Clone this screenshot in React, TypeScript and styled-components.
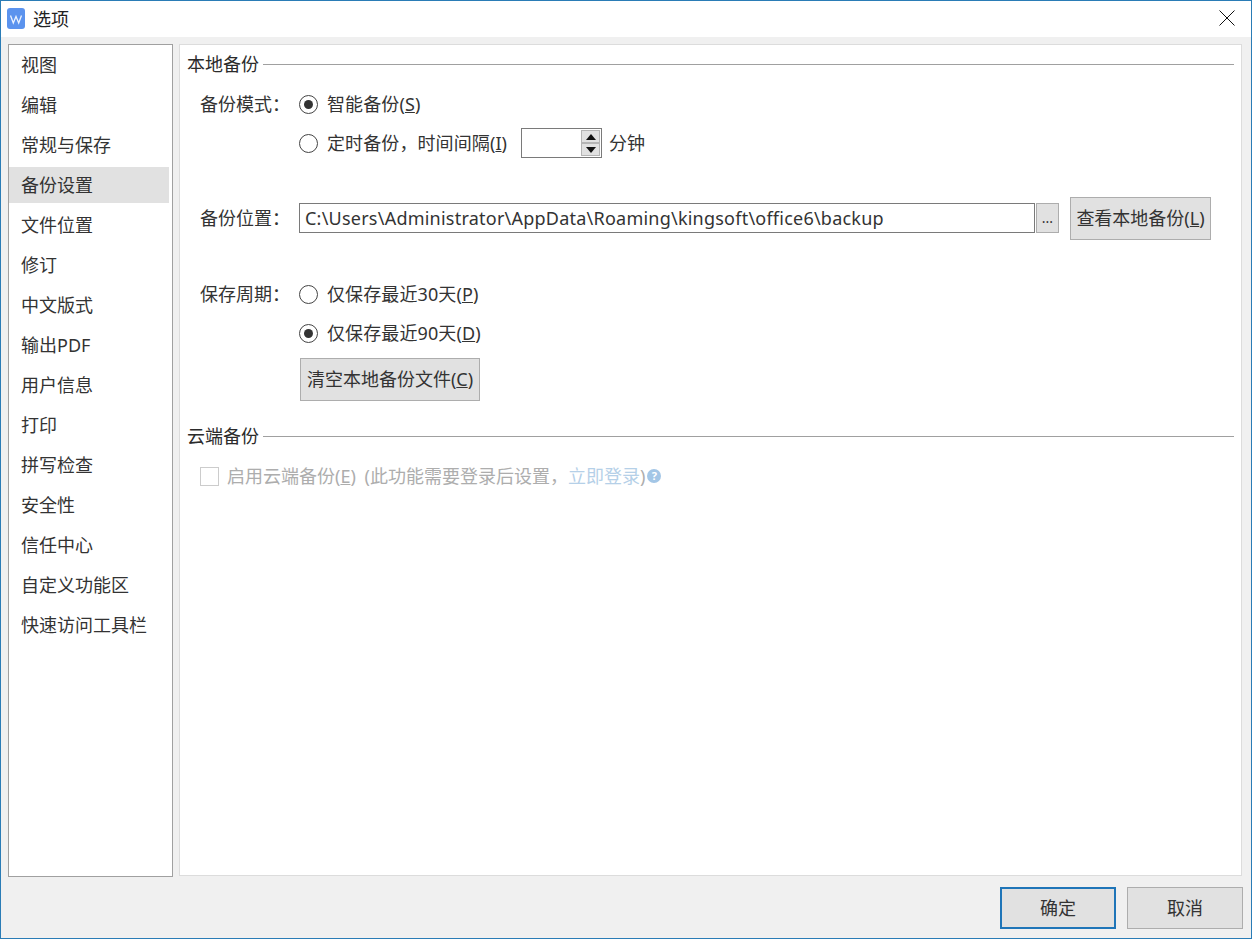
import React from 'react';
import styled, { createGlobalStyle } from 'styled-components';

const menuItems = [
  '视图', '编辑', '常规与保存', '备份设置', '文件位置', '修订', '中文版式', '输出PDF',
  '用户信息', '打印', '拼写检查', '安全性', '信任中心', '自定义功能区', '快速访问工具栏',
];

const GlobalStyle = createGlobalStyle`
  html, body {
    margin: 0;
    padding: 0;
    background: #fff;
  }
  * {
    box-sizing: border-box;
  }
`;

const App: React.FC = () => (
  <>
    <GlobalStyle />
    <Window>
      <TitleBar>
        <Logo viewBox="0 0 18 21">
          <path d="M3 0h12a3 3 0 0 1 3 3v15a3 3 0 0 1-3 3H3a3 3 0 0 1-3-3V3a3 3 0 0 1 3-3z" fill="#5b93ee" />
          <polyline points="3.5,7.5 6.3,15 9,8.5 11.7,15 14.5,7.5" fill="none" stroke="#eaf2ff" strokeWidth="1.3" />
        </Logo>
        <Title>选项</Title>
        <CloseIcon viewBox="0 0 16 16">
          <path d="M0.5 0.5L15.5 15.5M15.5 0.5L0.5 15.5" stroke="#111" strokeWidth="1" fill="none" />
        </CloseIcon>
      </TitleBar>

      <Body>
        <Sidebar>
          {menuItems.map(item => (
            <MenuItem key={item} $active={item === '备份设置'}>{item}</MenuItem>
          ))}
        </Sidebar>

        <Panel>
          <SectionHeader><SectionTitle>本地备份</SectionTitle></SectionHeader>

          <FormRow>
            <FieldLabel>备份模式：</FieldLabel>
            <Radio $checked />
            <OptionText>智能备份(<u>S</u>)</OptionText>
          </FormRow>
          <FormRow $top={9}>
            <FieldLabel />
            <Radio />
            <OptionText>定时备份，时间间隔(<u>I</u>)</OptionText>
            <Spinner>
              <SpinButtons>
                <SpinButton>
                  <svg width="10" height="6" viewBox="0 0 10 6"><path d="M5 0L10 6H0z" fill="#111" /></svg>
                </SpinButton>
                <SpinButton>
                  <svg width="10" height="6" viewBox="0 0 10 6"><path d="M0 0H10L5 6z" fill="#111" /></svg>
                </SpinButton>
              </SpinButtons>
            </Spinner>
            <UnitText>分钟</UnitText>
          </FormRow>

          <PathRow>
            <PathLabel>备份位置：</PathLabel>
            <PathInput>C:\Users\Administrator\AppData\Roaming\kingsoft\office6\backup</PathInput>
            <BrowseButton>...</BrowseButton>
            <PlainButton $width={141}>查看本地备份(<u>L</u>)</PlainButton>
          </PathRow>

          <FormRow $top={39}>
            <FieldLabel>保存周期：</FieldLabel>
            <Radio />
            <OptionText>仅保存最近30天(<u>P</u>)</OptionText>
          </FormRow>
          <FormRow $top={9}>
            <FieldLabel />
            <Radio $checked />
            <OptionText>仅保存最近90天(<u>D</u>)</OptionText>
          </FormRow>
          <ClearRow>
            <PlainButton $width={180}>清空本地备份文件(<u>C</u>)</PlainButton>
          </ClearRow>

          <SectionHeader $top={23}><SectionTitle>云端备份</SectionTitle></SectionHeader>

          <CloudRow>
            <Checkbox />
            <DisabledText>启用云端备份(<u>E</u>) (此功能需要登录后设置，<LoginLink>立即登录</LoginLink>)</DisabledText>
            <HelpIcon>?</HelpIcon>
          </CloudRow>
        </Panel>
      </Body>

      <Footer>
        <DialogButton $primary>确定</DialogButton>
        <DialogButton>取消</DialogButton>
      </Footer>
    </Window>
  </>
);

const fontStack = `"Noto Sans", "Noto Sans CJK SC", sans-serif`;

const Window = styled.div`
  width: 1252px;
  height: 939px;
  display: flex;
  flex-direction: column;
  background: #f0f0f0;
  border: 1px solid #2a7cb6;
  font-family: ${fontStack};
  font-size: 18px;
  color: #333;
  overflow: hidden;
`;

const TitleBar = styled.div`
  height: 36px;
  flex: none;
  display: flex;
  align-items: center;
  padding: 0 16px 2px 6px;
  background: #fff;
`;

const Logo = styled.svg`
  width: 18px;
  height: 21px;
  margin-right: 8px;
`;

const Title = styled.span`
  flex: 1;
  font-size: 18px;
  color: #222;
`;

const CloseIcon = styled.svg`
  width: 16px;
  height: 16px;
`;

const Body = styled.div`
  flex: none;
  display: flex;
  align-items: flex-start;
  gap: 6px;
  padding: 7px 9px 0 7px;
`;

const Sidebar = styled.div`
  width: 165px;
  height: 833px;
  flex: none;
  display: flex;
  flex-direction: column;
  gap: 4px;
  padding: 2px 3px 0 0;
  background: #fff;
  border: 1px solid #a0a0a0;
`;

const MenuItem = styled.div<{ $active?: boolean }>`
  height: 36px;
  line-height: 36px;
  padding-left: 12px;
  white-space: nowrap;
  background: ${p => (p.$active ? '#e1e1e1' : 'transparent')};
`;

const Panel = styled.div`
  flex: 1;
  height: 832px;
  display: flex;
  flex-direction: column;
  padding: 7px 7px 0 7px;
  background: #fff;
  border: 1px solid #dcdcdc;
`;

const SectionHeader = styled.div<{ $top?: number }>`
  height: 24px;
  flex: none;
  display: flex;
  align-items: center;
  gap: 4px;
  margin-top: ${p => p.$top ?? 0}px;
  white-space: nowrap;

  &::after {
    content: '';
    flex: 1;
    height: 1px;
    background: #a0a0a0;
  }
`;

const SectionTitle = styled.span`
  padding-bottom: 2px;
  color: #2b2b2b;
`;

const FormRow = styled.div<{ $top?: number }>`
  height: 30px;
  flex: none;
  display: flex;
  align-items: center;
  margin-top: ${p => p.$top ?? 13}px;
  padding-left: 13px;
`;

const FieldLabel = styled.span`
  width: 99px;
  flex: none;
  padding-bottom: 2px;
  white-space: nowrap;
`;

const PathLabel = styled(FieldLabel)`
  padding-bottom: 3px;
`;

const Radio = styled.span<{ $checked?: boolean }>`
  width: 19px;
  height: 19px;
  flex: none;
  display: flex;
  align-items: center;
  justify-content: center;
  margin-right: 9px;
  background: #fff;
  border: 1px solid #444;
  border-radius: 50%;

  &::after {
    content: '';
    width: 9px;
    height: 9px;
    border-radius: 50%;
    background: ${p => (p.$checked ? '#333' : 'transparent')};
  }
`;

const OptionText = styled.span`
  padding-bottom: 2px;
  letter-spacing: 0.1px;
  white-space: nowrap;
`;

const Spinner = styled.div`
  width: 81px;
  height: 30px;
  flex: none;
  display: flex;
  justify-content: flex-end;
  margin-left: 14px;
  padding: 1px;
  background: #fff;
  border: 1px solid #7a7a7a;
`;

const SpinButtons = styled.div`
  width: 19px;
  display: flex;
  flex-direction: column;
`;

const SpinButton = styled.div`
  flex: 1;
  display: flex;
  align-items: center;
  justify-content: center;
  background: #e1e1e1;
  border: 1px solid #b4b4b4;
`;

const UnitText = styled.span`
  margin-left: 7px;
  padding-bottom: 2px;
  white-space: nowrap;
`;

const PathRow = styled.div`
  height: 43px;
  flex: none;
  display: flex;
  align-items: center;
  margin-top: 39px;
  padding-left: 13px;
`;

const PathInput = styled.div`
  width: 736px;
  height: 30px;
  flex: none;
  margin-bottom: 1px;
  padding-left: 5px;
  line-height: 28px;
  letter-spacing: 0.23px;
  background: #fff;
  border: 1px solid #7a7a7a;
  white-space: nowrap;
`;

const BrowseButton = styled.div`
  width: 23px;
  height: 30px;
  flex: none;
  margin: 0 11px 1px 1px;
  line-height: 28px;
  text-align: center;
  font-size: 14px;
  background: #e1e1e1;
  border: 1px solid #adadad;
`;

const PlainButton = styled.div<{ $width: number }>`
  width: ${p => p.$width}px;
  height: 43px;
  flex: none;
  line-height: 41px;
  text-align: center;
  white-space: nowrap;
  background: #e1e1e1;
  border: 1px solid #adadad;
`;

const ClearRow = styled.div`
  flex: none;
  display: flex;
  margin-top: 10px;
  padding-left: 113px;
`;

const CloudRow = styled.div`
  height: 30px;
  flex: none;
  display: flex;
  align-items: center;
  margin-top: 13px;
  padding-left: 13px;
`;

const Checkbox = styled.span`
  width: 19px;
  height: 19px;
  flex: none;
  margin-right: 8px;
  background: #fff;
  border: 1px solid #ccc;
`;

const DisabledText = styled.span`
  padding-bottom: 2px;
  color: #adadad;
  word-spacing: 4px;
  white-space: nowrap;
`;

const LoginLink = styled.span`
  color: #b5d0e8;
`;

const HelpIcon = styled.span`
  width: 14px;
  height: 14px;
  flex: none;
  margin-left: 2px;
  border-radius: 50%;
  background: #a3c6e6;
  color: #fff;
  font-size: 11px;
  font-weight: 700;
  line-height: 14px;
  text-align: center;
`;

const Footer = styled.div`
  flex: 1;
  min-height: 0;
  display: flex;
  justify-content: flex-end;
  gap: 11px;
  padding: 10px 8px 0 0;
`;

const DialogButton = styled.div<{ $primary?: boolean }>`
  width: 116px;
  height: 42px;
  line-height: ${p => (p.$primary ? 38 : 40)}px;
  text-align: center;
  background: #e1e1e1;
  border: ${p => (p.$primary ? '2px solid #1f75b8' : '1px solid #adadad')};
`;

export default App;
